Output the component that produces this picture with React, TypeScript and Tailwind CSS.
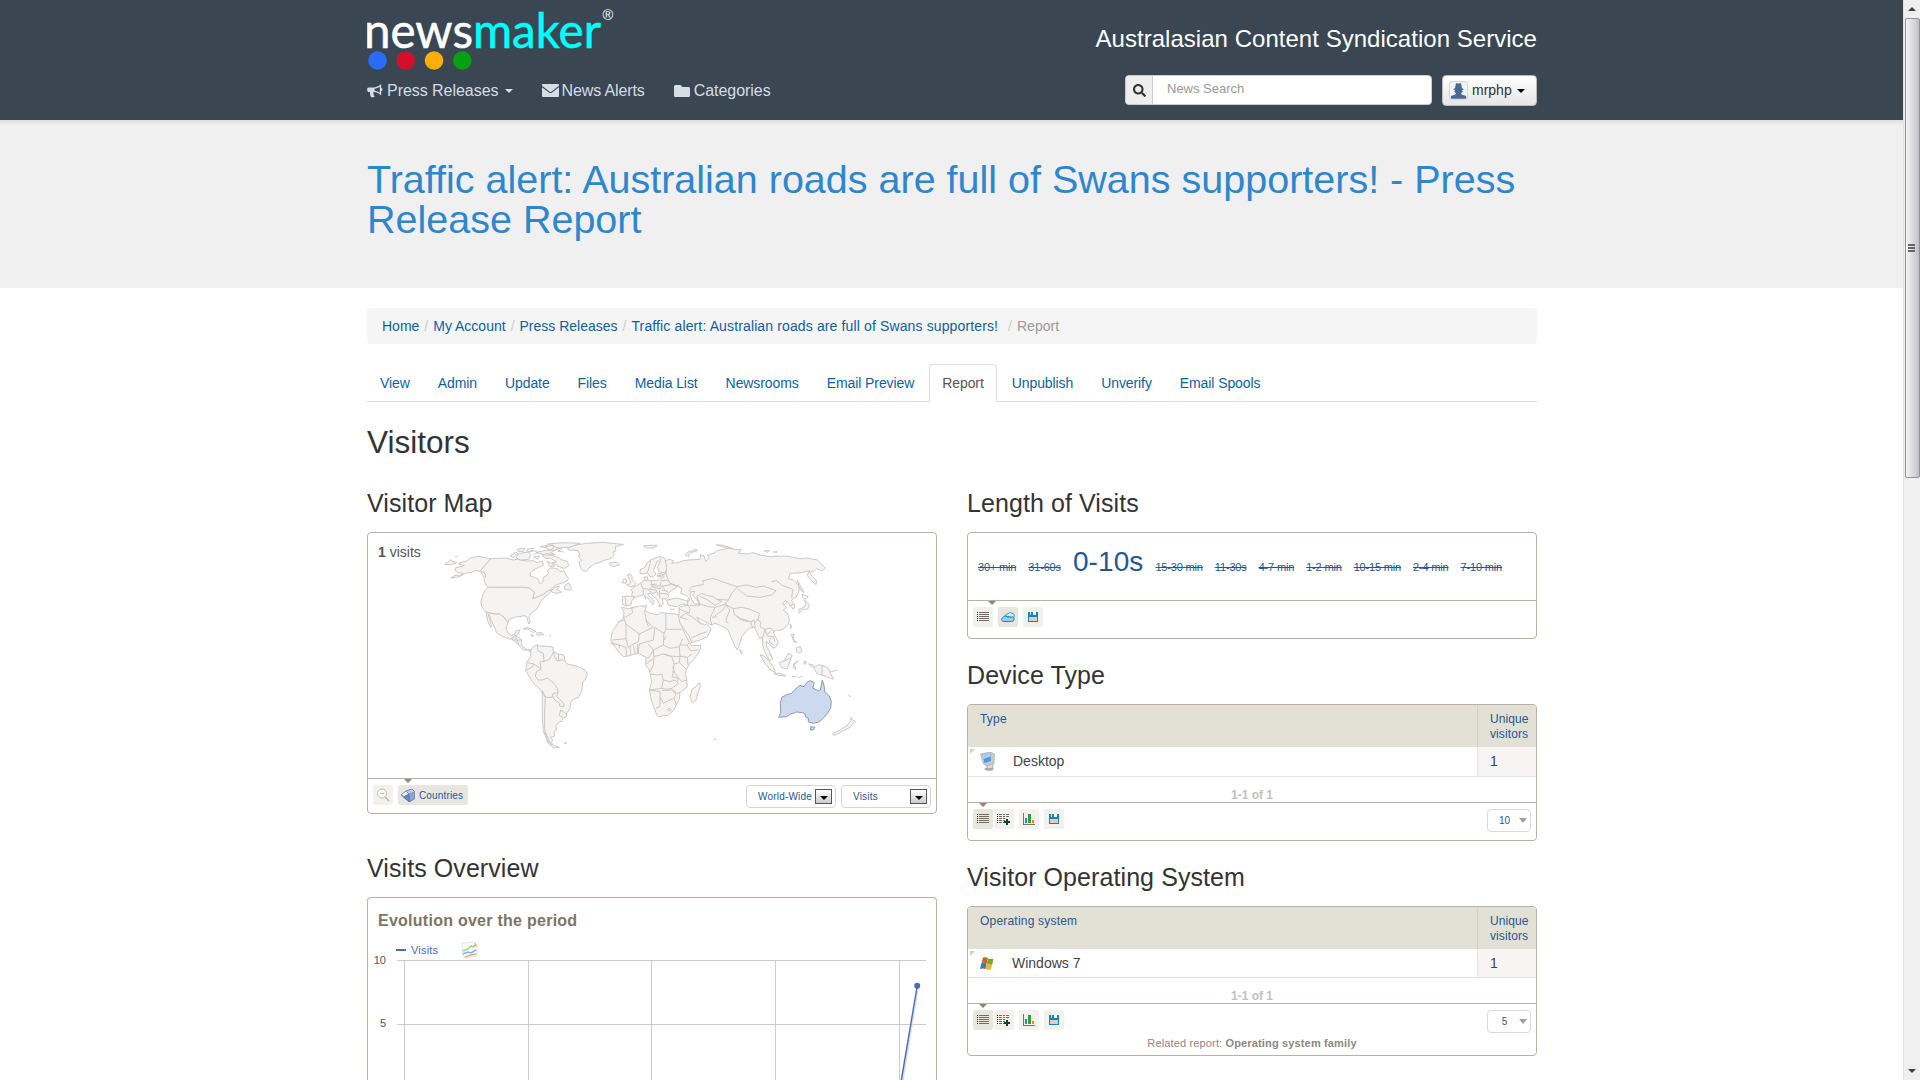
import React from 'react';
import { FaFolder, FaSearch } from 'react-icons/fa';

const SANS = "font-['Liberation_Sans',Arial,sans-serif]";

/* ---------- header ---------- */

function Logo() {
  return (
    <svg width="260" height="70" viewBox="0 0 260 70" className="block">
      <text x="-3" y="48" fontFamily="Lato, sans-serif" fontSize="48" stroke="#fff" strokeWidth="0.5" fill="#fff" textLength="109" lengthAdjust="spacingAndGlyphs">news</text>
      <text x="106" y="48" fontFamily="Lato, sans-serif" fontSize="48" stroke="#0ff" strokeWidth="0.5" fill="#0ff" textLength="128" lengthAdjust="spacingAndGlyphs">maker</text>
      <text x="235.500" y="20" fontFamily="Liberation Sans, sans-serif" fontSize="14.500" fill="#fff">®</text>
      <circle cx="10.500" cy="60.500" r="9.300" fill="#2b6bff" />
      <circle cx="38.700" cy="60.500" r="9.300" fill="#d50f2b" />
      <circle cx="67" cy="60.500" r="9.300" fill="#ffae0d" />
      <circle cx="95.300" cy="60.500" r="9.300" fill="#06a010" />
    </svg>
  );
}

function Bullhorn() {
  return (
    <svg width="16" height="14" viewBox="0 0 16 14" fill="#d5dde5">
      <path fillRule="evenodd" d="M14.200 0v4.200a1.400 1.400 0 0 1 0 2.800v4.400C12 9.500 9.500 8.300 6.900 8.100c-.9.500-.8 1.500-.1 2.100-.4.700.1 1.300 1 2-.6 1.300-3.200 1.400-4 .6C3.400 11.300 2.600 9.800 3 8H1.600A1.500 1.500 0 0 1 .2 6.500V4.800c0-.8.600-1.400 1.400-1.400h4.700C9 3.400 11.900 2.100 14.200 0zM12.800 2.800C11 4 9.200 4.600 7.600 4.700v2c1.700.2 3.500.8 5.200 2z" />
    </svg>
  );
}

function Envelope() {
  return (
    <svg width="17" height="13" viewBox="0 0 17 13">
      <rect width="17" height="13" rx="1" fill="#d5dde5" />
      <path d="M0 2.500l7.300 5.600c.8.600 1.600.6 2.400 0L17 2.500" fill="none" stroke="#3a4753" strokeWidth="1.100" />
    </svg>
  );
}

function Avatar() {
  return (
    <span className="flex h-[19px] w-[19px] items-center justify-center rounded-[3px] border border-[#d9d9d9] bg-[#f1f2f4]">
      <svg width="17" height="17" viewBox="0 0 17 17" fill="#4b6892">
        <path d="M6 1l1.500.5h2L11 1l1 5.200 1.800.8L12 8.500l.8 1.500-1.600 1 .3 1.500 4 1.200 1 1.500-1 1.500H1.500l-1-1.500 1-1.500 4-1.200.3-1.500-1.600-1 .8-1.500L3.200 7 5 6.200z" />
      </svg>
    </span>
  );
}

function Header() {
  return (
    <header className="h-[120px] bg-[#3a4753]">
      <div className="ml-[367px] flex h-full w-[1170px] justify-between">
        <div>
          <Logo />
          <nav className="mt-[9px] flex h-[23px] items-center text-[16px] tracking-[-0.04px] text-[#d5dde5]">
            <span className="flex items-center gap-1"><Bullhorn />Press Releases
              <span className="ml-[2px] h-0 w-0 border-x-4 border-t-4 border-x-transparent border-t-[#d5dde5]" />
            </span>
            <span className="ml-[29px] flex items-center gap-[3px] tracking-[-0.12px]"><Envelope />News Alerts</span>
            <span className="ml-[29px] flex items-center gap-[4px]"><FaFolder size={16} />Categories</span>
          </nav>
        </div>
        <div className="flex flex-col items-end">
          <div className="mt-[24px] h-[30px] whitespace-nowrap text-[24px] leading-[30px] tracking-[0.03px] text-white">Australasian Content Syndication Service</div>
          <div className="mt-[21px] flex gap-[10px]">
            <div className="flex h-[30px] w-[307px] overflow-hidden rounded-[4px] border border-[#ccc] bg-white">
              <span className="flex w-[27px] items-center justify-center border-r border-[#ccc] bg-[#eee] text-[#333]"><FaSearch size={13} /></span>
              <span className="pl-[14px] text-[13px] leading-[26px] text-[#999]">News Search</span>
            </div>
            <div className="flex h-[31px] w-[95px] items-center rounded-[4px] border border-[#bbb] bg-gradient-to-b from-white to-[#e6e6e6] pl-[6px] text-[14px] text-[#333]">
              <Avatar />
              <span className="ml-[4px]">mrphp</span>
              <span className="ml-[5px] h-0 w-0 border-x-4 border-t-4 border-x-transparent border-t-black" />
            </div>
          </div>
        </div>
      </div>
    </header>
  );
}

/* ---------- navigation ---------- */

const CRUMBS = ['Home', 'My Account', 'Press Releases', 'Traffic alert: Australian roads are full of Swans supporters!'];

function Breadcrumb() {
  return (
    <div className="mt-[20px] flex h-[36px] items-center rounded-[4px] bg-[#f5f5f5] px-[15px] text-[14px]">
      {CRUMBS.map((c, i) => (
        <React.Fragment key={c}>
          <span className={i === 3 ? 'tracking-[0.13px] text-[#0f5f9f]' : 'text-[#0f5f9f]'}>{c}</span>
          <span className={i === 3 ? 'ml-[10px] mr-[5px] text-[#ccc]' : 'mx-[5px] text-[#ccc]'}>/</span>
        </React.Fragment>
      ))}
      <span className="text-[#999]">Report</span>
    </div>
  );
}

const TABS = ['View', 'Admin', 'Update', 'Files', 'Media List', 'Newsrooms', 'Email Preview', 'Report', 'Unpublish', 'Unverify', 'Email Spools'];

function Tabs() {
  return (
    <div className="mt-[20px] flex h-[38px] border-b border-[#ddd] text-[14px] leading-[20px] tracking-[-0.09px]">
      {TABS.map((t) =>
        t === 'Report' ? (
          <span key={t} className="mr-[2px] h-[38px] rounded-t-[4px] border border-b-0 border-[#ddd] bg-white px-[12px] pt-[8px] text-[#555]">{t}</span>
        ) : (
          <span key={t} className="mr-[2px] px-[13px] pt-[9px] text-[#0f5f9f]">{t}</span>
        ),
      )}
    </div>
  );
}

/* ---------- small icons ---------- */

function IconBox({ active, children }: { active?: boolean; children: React.ReactNode }) {
  return (
    <span className={active ? 'flex h-[20px] w-[20px] items-center justify-center rounded-[2px] bg-[#e8e7df]' : 'flex h-[20px] w-[20px] items-center justify-center rounded-[2px] bg-[#f2f1ed]'}>
      {children}
    </span>
  );
}

function ListIcon() {
  return (
    <svg width="12" height="10" viewBox="0 0 12 10" shapeRendering="crispEdges">
      {[0, 2, 4, 6, 8].map((y) => (
        <g key={y}>
          <rect x="0" y={y} width="1" height="1" fill="#222" />
          <rect x="2" y={y} width="10" height="1" fill="#776c5c" />
        </g>
      ))}
    </svg>
  );
}

function ListPlusIcon() {
  return (
    <svg width="14" height="11" viewBox="0 0 14 11" shapeRendering="crispEdges">
      {[0, 2, 4, 6, 8].map((y) => (
        <g key={y}>
          <rect x="0" y={y} width="1" height="1" fill="#222" />
          <rect x="2" y={y} width="3" height="1" fill="#776c5c" />
          <rect x="6" y={y} width="2" height="1" fill="#776c5c" />
          {y < 4 && <rect x="9" y={y} width="3" height="1" fill="#776c5c" />}
        </g>
      ))}
      <path d="M10 5v6M7 8h6" stroke="#054a22" strokeWidth="2" />
    </svg>
  );
}

function BarsIcon() {
  return (
    <svg width="12" height="12" viewBox="0 0 12 12" shapeRendering="crispEdges">
      <path d="M0 0h1v11h11v1H0z" fill="#7d7263" />
      <rect x="2" y="5" width="2" height="5" fill="#1d8fc5" />
      <rect x="5" y="1" width="3" height="9" fill="#2f9d3a" />
      <rect x="9" y="7" width="2" height="3" fill="#f08519" />
    </svg>
  );
}

function DiskIcon() {
  return (
    <svg width="10" height="10" viewBox="0 0 10 10" shapeRendering="crispEdges">
      <path d="M0 0h2v3h6V0h2v10H0z" fill="#0f86c3" />
      <rect x="3" y="0" width="2" height="3" fill="#0f86c3" />
      <rect x="2" y="0" width="1" height="3" fill="#cfe6f2" />
      <rect x="5" y="0" width="2" height="3" fill="#fff" />
      <rect x="1" y="5" width="8" height="4" fill="#d8d0c2" />
    </svg>
  );
}

function CloudIcon() {
  return (
    <svg width="14" height="10" viewBox="0 0 14 10">
      <path d="M4.500 4C4.500 2.200 5.500 1.500 7 1.900 8 .3 10.200.2 11 1.500c1.700-.2 2.400.7 2.300 2.200L12.500 6z" fill="#d5eef8" stroke="#3a9ecb" strokeWidth="1" />
      <path d="M2.300 9.500C.2 9.300 0 6 2 5.500 2.600 3.600 5.400 3.600 6.200 5h4.500c1.500-.4 2.400.4 2.400 1.900 0 1.700-.8 2.600-2.300 2.600z" fill="#8fd0ea" stroke="#1b80b3" strokeWidth="1" />
    </svg>
  );
}

function Notch({ left }: { left: string }) {
  return <span className={`absolute top-0 h-0 w-0 border-x-4 border-t-4 border-x-transparent border-t-[#8f8576] ${left}`} />;
}

/* ---------- map ---------- */

const WEST = [
  'M62,144 75,136 88,137 100,130 85,128 75,122 78,112 95,110 103,106 85,102 90,98 108,94 120,84 145,79 183,86 151,122 163,128 169,140 170,148 163,144 158,134 150,124 135,122 124,127 112,128 100,134 85,141z',
  'M183,86 205,85 230,84 250,90 262,88 290,93 310,92 320,98 337,93 340,106 325,112 310,120 302,128 300,138 314,142 325,148 328,159 334,160 338,158 340,142 350,137 355,130 353,122 362,114 370,114 385,118 390,125 402,122 408,135 416,146 412,152 400,158 380,164 362,178 355,182 340,193 325,200 308,206 313,188 298,174 280,172 175,172 166,162 162,148 168,138 163,128 151,122z',
  'M362,184 375,172 388,168 380,178 395,186 384,190 370,188z M402,170 416,158 424,172 422,181 405,178z',
  'M175,172 280,172 298,174 313,188 308,206 325,200 340,193 355,182 366,180 352,196 343,202 330,218 326,228 318,240 302,250 297,262 301,275 297,282 292,270 290,260 282,257 270,260 256,261 245,266 236,268 234,278 222,262 208,252 192,252 168,246 155,230 153,215 158,195 166,180z',
  'M168,246 192,252 208,252 222,262 234,278 228,295 235,310 245,316 255,312 258,302 270,300 264,314 255,318 246,322 247,328 235,326 215,318 199,308 195,295 185,275 178,255 174,250 178,265 184,285 182,293 172,270z',
  'M246,328 254,316 263,320 275,329 273,340 280,352 290,358 301,358 300,365 290,360 280,360 268,346 258,338z M250,330 262,330 266,342 M258,318 258,330 M262,330 274,330',
  'M280,297 290,292 305,297 318,304 308,307 296,298z M318,310 335,307 341,314 322,316z M303,315h8v3h-8z M360,315h2v2h-2z',
  'M412,57 430,46 470,40 520,37 555,41 580,43 556,50 558,62 548,66 553,75 545,84 520,92 508,98 495,100 485,108 476,115 470,124 458,122 450,108 447,96 455,92 445,78 450,76 444,62 418,60z',
  'M538,100 545,97 560,98 569,104 552,110 541,107z',
  'M44,103 62,89 66,94 80,98 64,104z M75,79l8,0',
  'M240,78 258,66 264,72 250,82z M262,58 285,54 280,64 264,64z M258,84 268,70 296,66 302,76 296,88 272,90z M290,58 312,54 306,64 292,66z M312,80 328,78 322,88z M330,50 352,46 346,54z M336,76 352,70 388,84 396,90 412,94 416,106 404,116 384,108 366,98 380,96 360,84 348,86z M318,68 342,62 378,60 362,68 376,74 350,76z M345,52 368,44 372,54 360,60z M352,42 400,38 450,40 418,52 384,54 370,48z M376,58 396,54 390,62z M352,94 364,100 374,108 360,110z M310,76l14,-10 M384,64l18,2 M302,62l20,2',
  'M303,360 310,350 322,344 328,348 345,348 368,351 370,365 385,372 402,376 406,396 412,402 430,406 445,410 465,420 472,432 468,445 458,458 455,485 445,502 430,508 422,518 420,535 408,552 410,560 398,565 396,574 388,575 378,588 380,600 372,606 374,618 362,622 368,630 364,638 370,645 388,652 372,654 352,638 350,628 340,602 337,560 337,490 330,478 312,462 298,440 287,422 290,398 302,380z',
  'M322,344 324,362 340,370 342,394 330,396 333,418 320,424 316,438 324,450 337,450 M342,394 358,388 368,372 370,365 M370,365 374,380 380,392 402,390 M385,372 386,392 M292,398 312,402 306,412 290,420 M312,402 332,416 M337,450 352,444 372,460 382,474 384,488 370,490 366,502 346,502 338,482 M384,488 380,500 396,514 402,522 400,530 M366,492 372,508 390,520 388,528 402,530 M392,540 410,552 M392,540 388,556 398,564 M337,486 346,502 344,540 344,600 350,616 362,640',
  'M340,606 348,612 352,632 366,645 M403,640h6l-3,-4z',
];

const EAST = [
  'M65,232 85,236 118,228 135,228 136,242 145,248 160,252 175,254 182,247 198,250 228,252 234,254 240,272 250,300 260,322 270,338 275,347 303,346 298,365 282,388 268,402 260,418 256,430 260,448 262,470 240,488 238,508 230,520 222,540 205,555 175,560 170,555 165,540 155,515 148,480 155,455 152,440 148,420 137,405 138,382 125,375 115,370 98,374 85,378 70,380 55,365 45,350 34,340 33,325 37,305 55,278 70,265 72,248z',
  'M95,232 98,248 70,265 M54,275 72,270 M72,266 78,282 78,326 38,330 M78,282 118,312 158,292 138,270 134,242 M118,312 115,335 95,345 85,352 78,326 M158,292 164,298 160,330 118,342 M138,270 145,290 M197,250 198,298 245,298 M198,298 192,310 164,292 M192,310 190,345 160,360 145,342 M190,345 210,355 238,350 248,325 M198,320 192,330 M33,340 58,345 58,355 M35,332 45,345 M58,345 78,352 80,378 M90,348 92,375 M100,346 106,372 M113,342 112,370 M118,342 115,360 115,370 M160,360 145,385 138,382 M160,360 162,380 190,372 210,378 240,380 238,350 M240,345 260,345 270,338 M260,345 272,362 295,360 M240,378 262,382 275,372 M262,382 264,405 M162,380 160,405 150,425 M138,402 160,385 M190,372 215,380 222,400 218,440 M240,380 238,398 222,402 M238,398 260,418 M218,410 225,430 245,455 260,450 M152,432 172,435 185,432 190,450 185,475 148,480 M190,450 210,455 225,450 235,460 M185,475 200,478 215,475 235,460 M215,475 230,490 240,488 M148,480 180,485 180,500 M185,482 215,480 228,492 222,505 205,512 190,520 180,500 180,530 168,535 M222,505 228,525 M207,535a5,4 0 1 0 6,3z M215,440 235,445 232,455',
  'M298,457 301,468 295,485 288,510 277,518 270,502 276,478 288,470z',
  'M67,200 85,198 104,202 96,212 92,225 76,228 68,224z M75,200 78,226',
  'M92,180 100,172 112,166 120,160 125,156 132,150 140,150 152,152 170,152 182,146 192,140 186,132 175,130 172,138 192,134 200,128 196,112 195,92 210,88 222,94 215,100 235,98 250,92 265,90 300,88 302,74 312,78 318,95 328,82 322,76 345,68 350,62 385,55 422,60 416,70 440,72 460,68 480,75 510,80 560,78 600,86 620,84 652,90 676,114 668,122 650,116 642,124 628,124 635,138 650,152 648,164 632,150 622,136 628,122 605,128 570,130 566,146 580,150 595,165 598,180 590,200 578,206 575,212 585,226 580,238 572,228 566,218 555,212 548,222 560,232 550,240 562,250 568,268 566,280 550,298 535,302 530,300 520,306 526,320 535,336 528,350 518,355 512,345 498,335 500,350 510,368 518,388 508,392 496,370 488,345 488,322 478,325 472,310 462,290 445,296 438,305 425,320 420,340 412,360 405,350 388,310 384,300 370,290 345,280 335,285 310,272 290,262 300,278 315,285 320,282 334,296 322,320 300,330 275,338 268,320 240,280 236,262 238,232 250,228 265,226 248,222 230,230 205,226 200,210 232,204 266,214 270,208 258,196 242,190 245,175 225,165 210,160 232,170 215,182 204,190 206,200 196,208 186,205 190,220 182,230 172,210 160,198 150,190 142,192 155,205 163,216 158,224 150,212 138,200 130,194 118,198 105,202 95,196 98,185z',
  'M120,120 135,112 142,98 152,90 170,82 182,80 195,86 200,112 196,128 178,126 172,112 180,98 172,92 166,108 160,122 168,132 160,140 150,140 142,128 130,132 120,130z M152,90 148,110 142,128 M182,86 180,98',
  'M80,165 92,160 88,148 84,138 88,130 96,138 96,148 106,158 104,168 90,170z M66,158 72,146 80,150 78,160z M80,132 86,138',
  'M136,152 132,142 142,140 144,152z M138,222l2,10 M172,228l14,2 M210,238l14,-1 M134,200l4,8z',
  'M122,160 128,175 148,178 158,168 152,152 M158,168 180,168 184,152 M148,178 168,180 175,196 M158,172 180,176 185,168 210,165 M180,176 178,190 204,192 M178,190 180,205 M184,152 205,150 210,160 M172,138 190,142 M130,178 130,194 M186,180 204,185 M146,182 160,190 168,186 M150,165 170,162 M188,168 196,182 M196,128 204,148 M208,162 236,168',
  'M265,205 262,222 270,235 268,250 236,236 M268,182 275,170 310,164 308,152 340,145 375,158 412,170 395,190 385,210 350,208 340,200 320,196 305,190 290,200 300,222 296,230 M268,182 276,192 M270,225 282,228 300,222 325,230 345,232 340,245 330,262 335,285 M300,200 320,208 345,226 365,214 350,208 M385,210 375,222 400,236 425,232 450,238 478,250 475,268 462,280 M375,222 365,226 345,232 M345,258 368,240 378,225 M335,262 350,260 M378,225 390,240 380,262 378,275 385,280 M400,236 402,252 420,265 452,275 462,270 M410,260 425,270 445,275 M410,170 440,165 468,172 490,168 528,182 515,195 480,202 440,198 412,176 M515,155 530,152 545,165 578,178 575,205 M470,268 482,276 480,290 495,298 510,294 525,305 M495,298 488,322 M495,300 502,318 520,320 525,335 M512,322 508,335 520,345 M502,312 514,304 M452,275 458,295 M462,270 466,292 M550,225 562,218 M567,228 582,222 M508,372 516,380 M240,262 258,250 278,262 305,284 M240,262 262,268 M272,325 300,312 322,305',
  'M285,185 278,195 290,208 298,222 284,222 275,208 270,196 275,184z',
  'M255,75 265,66 290,58 292,62 268,70 266,80z M130,48 150,46 172,46 160,54 140,54z M348,44 370,46 400,56 380,54z M492,62h16l-6,5z M520,66h12z M420,60l8,-4',
  'M592,150 600,165 612,188 606,184 596,168z M606,192 625,200 616,208 608,202z M614,210 628,224 624,236 606,240 598,250 596,238 612,232 618,222z M570,282 575,290 572,296z M418,358 428,366 424,372z M574,314 582,312 580,326 590,338 582,336z M590,352 602,350 606,364 598,370 588,362z M480,374 492,378 508,394 520,410 526,428 512,420 495,400z M522,430 540,430 558,438 535,436z M538,398 552,392 566,370 576,376 570,394 562,416 546,414z M546,396l26,-12 M580,402 596,392 584,404 588,418 580,414z M575,440 592,440 M594,444 608,438 M612,394h6v8h-6z M626,402 638,404 644,412 656,404 672,408 684,414 692,430 700,448 688,444 675,438 650,430 645,418z M666,406 666,438 M690,426 712,420 M744,494 753,502',
  'M753,562 758,570 766,574 756,584 750,592 730,602 712,612 700,616 698,610 720,600 744,584 752,572z M342,628l6,0',
];

const AUSTRALIA =
  'M536,562 542,548 541,520 545,502 560,494 575,490 585,478 600,466 612,470 620,458 630,452 643,458 638,474 655,482 661,480 667,450 672,466 675,485 688,498 694,515 692,535 682,550 670,565 656,576 640,580 625,576 625,564 618,562 615,552 608,548 590,546 572,552 560,560z M632,590 645,592 640,600 632,600z';

function WorldMap() {
  return (
    <svg width="440" height="225" viewBox="0 0 1320 675" className="block" strokeLinejoin="round">
      <g fill="#f5f4f3" stroke="#c6c5c4" strokeWidth="2.800">
        {WEST.map((d, i) => <path key={d} d={d} fill={i === 12 || i === 13 ? 'none' : '#f5f4f3'} />)}
      </g>
      <g transform="translate(510 0)" fill="#f5f4f3" stroke="#c6c5c4" strokeWidth="2.800">
        {EAST.map((d, i) => <path key={d} d={d} fill={i === 1 || i === 8 || i === 9 ? 'none' : i === 10 ? '#fff' : '#f5f4f3'} />)}
        <path d={AUSTRALIA} fill="#cdd9ef" stroke="#8a93a3" />
      </g>
    </svg>
  );
}

function SelectBox({ label }: { label: string }) {
  return (
    <span className="flex h-[23px] w-[90px] items-center justify-between whitespace-nowrap rounded-[4px] border border-[#d4d4d4] pl-[11px] pr-[3px] text-[10px] tracking-[0.2px] text-[#255792]">
      {label}
      <span className="flex h-[15px] w-[17px] shrink-0 items-center justify-center border border-[#555] bg-gradient-to-b from-white to-[#ccc]">
        <span className="mt-[3px] h-0 w-0 border-x-4 border-t-4 border-x-transparent border-t-black" />
      </span>
    </span>
  );
}

function MapPanel() {
  return (
    <section className="mt-[9px] h-[282px] rounded-[4px] border border-[#b8b1a4]">
      <div className="flex h-[245px]">
        <div className="w-[62px] shrink-0 whitespace-nowrap pl-[10px] pt-[9px] text-[14px] leading-[20px] text-[#555]"><b>1</b> visits</div>
        <div className="-mt-[3px]"><WorldMap /></div>
      </div>
      <div className="relative flex h-[35px] border-t border-[#b8b1a4] pl-[5px] pr-[5px] pt-[6px]">
        <Notch left="left-[36px]" />
        <IconBox>
          <svg width="14" height="14" viewBox="0 0 14 14" fill="none" stroke="#bcbab5">
            <circle cx="6" cy="5.500" r="4.500" fill="#fafafa" /><path d="M4 5.500h4M9.200 9l4 4" /><path d="M9.500 9.500l3.300 3.300" strokeWidth="1.600" />
          </svg>
        </IconBox>
        <span className="ml-[5px] flex h-[20px] w-[70px] items-center gap-[4px] rounded-[2px] bg-[#e8e7df] pl-[3px] text-[10px] tracking-[0.15px] text-[#255792]">
          <svg width="14" height="13" viewBox="0 0 14 13" strokeWidth=".7">
            <path d="M5 2l6-2 3 3-.5 7-5 3L3 8.500 0 6z" fill="#8da5d2" stroke="#586d99" /><path d="M5 2l3 3L3.500 7.500 0 6z" fill="#eef4ff" stroke="#7188b5" /><path d="M8 5l.5 8L3 8.500l.5-1z" fill="#6f88bd" stroke="#586d99" /><path d="M5 2l6-2 3 3-6 2z" fill="#b9c9e8" stroke="#7188b5" />
          </svg>
          <span className="whitespace-nowrap pt-px">Countries</span>
        </span>
        <span className="ml-auto flex gap-[5px]">
          <SelectBox label="World-Wide" />
          <SelectBox label="Visits" />
        </span>
      </div>
    </section>
  );
}

/* ---------- visits overview ---------- */

function OverviewPanel() {
  return (
    <section className="mt-[9px] h-[240px] rounded-t-[4px] border border-b-0 border-[#b8b1a4]">
      <h4 className="ml-[10px] h-[32px] pt-[13px] text-[16px] font-bold leading-[20px] tracking-[0.26px] text-[#7e7363]">Evolution over the period</h4>
      <svg width="568" height="160" viewBox="0 0 568 160" className="block" fontFamily="Liberation Sans, sans-serif">
        <rect x="28" y="19" width="10" height="2" fill="#4a6cb3" />
        <text x="43" y="24" fontSize="11" fill="#4a6cb3" textLength="27">Visits</text>
        <g transform="translate(94 12)">
          <path d="M0 1l12-1 3 3v11L3 16 1 14z" fill="#fafafa" stroke="#ddd" strokeWidth=".7" />
          <path d="M1 9l5-2 3-3 2 1 3-3" stroke="#a5dc78" strokeWidth="1.600" fill="none" />
          <path d="M1 12l5-2 3 1 5-3" stroke="#7ab4f2" strokeWidth="1.500" fill="none" />
          <path d="M3 15l6-2 5-1M13 1l1 4" stroke="#f0a878" strokeWidth="1.400" fill="none" />
        </g>
        <g fontSize="11" fill="#545454" textAnchor="end"><text x="18" y="34">10</text><text x="18" y="97">5</text></g>
        <g stroke="#ccc" shapeRendering="crispEdges">
          <path d="M28.500 30.500H558M28.500 94.500H558" />
          <path d="M36.500 30v130M160.500 30v130M283.500 30v130M407.500 30v130M531.500 30v130" />
        </g>
        <path d="M534.300 152L550 57" stroke="#ddd" strokeWidth="2" />
        <path d="M533 152L549.200 56" stroke="#4a6cb3" strokeWidth="1.400" />
        <circle cx="549.200" cy="55.700" r="3" fill="#4a6cb3" />
      </svg>
    </section>
  );
}

/* ---------- length of visits ---------- */

const LENGTHS = ['30+ min', '31-60s', '0-10s', '15-30 min', '11-30s', '4-7 min', '1-2 min', '10-15 min', '2-4 min', '7-10 min'];

function LengthPanel() {
  return (
    <section className="mt-[9px] h-[107px] rounded-[4px] border border-[#b8b1a4]">
      <div className="flex h-[67px] items-baseline gap-[12px] whitespace-nowrap pl-[10px] pt-[11px] text-[#255792]">
        {LENGTHS.map((l) =>
          l === '0-10s' ? <span key={l} className="text-[28px] leading-[36px] tracking-[0.1px]">{l}</span> : <span key={l} className="text-[11px] tracking-[-0.17px] line-through">{l}</span>,
        )}
      </div>
      <div className="relative flex h-[38px] gap-[5px] border-t border-[#b8b1a4] pl-[5px] pt-[6px]">
        <Notch left="left-[20px]" />
        <IconBox><ListIcon /></IconBox>
        <IconBox active><CloudIcon /></IconBox>
        <IconBox><DiskIcon /></IconBox>
      </div>
    </section>
  );
}

/* ---------- data tables ---------- */

function DesktopIcon() {
  return (
    <svg width="16" height="19" viewBox="0 0 16 19">
      <ellipse cx="9" cy="17" rx="4.500" ry="1.800" fill="#aaa" />
      <path d="M6 12l6-1 1 5-5 1z" fill="#ddd" stroke="#999" strokeWidth=".7" />
      <path d="M.5 2l10-2 4 2-.5 10-8 2L3 11z" fill="#c8cbcd" stroke="#aaa" strokeWidth=".7" />
      <path d="M2.500 3l8-1.500.5 7.500-6.500 2z" fill="#4d9ae0" />
      <path d="M2.500 3l8-1.500v3L3.500 7z" fill="#a4d2f8" />
    </svg>
  );
}

function WindowsIcon() {
  return (
    <svg width="14" height="13" viewBox="0 0 14 13">
      <path d="M3 .5C5-.2 6 .2 7.800 1L6.700 6.500C4.800 5.700 3.500 5.700 1.600 6.200z" fill="#c9652a" />
      <path d="M7.800 1.200c2 1 3.500 1 5.700.5L12.300 7.500c-1.800.4-3.500.3-5.400-.9z" fill="#76a634" />
      <path d="M1.400 6.200c1.800-.6 3.400-.5 5.200.4L5.500 12C3.500 11.200 2 11.200 0 12z" fill="#3c78bd" />
      <path d="M6.700 6.800c1.500.8 3.500 1.100 5.400.6L10.900 12.500c-1.700.5-3.500.4-5.400-.5z" fill="#e4ba28" />
    </svg>
  );
}

interface TableProps {
  heading: string;
  label: string;
  icon: React.ReactNode;
  count: string;
  rowClass: string;
  panelClass: string;
  labelClass: string;
  related?: string;
}

function TablePanel({ heading, label, icon, count, rowClass, panelClass, labelClass, related }: TableProps) {
  return (
    <section className={`mt-[9px] overflow-hidden rounded-[4px] border border-[#b8b1a4] ${panelClass}`}>
      <div className="flex h-[42px] bg-[#e3e1d6] text-[12px] leading-[15px] text-[#255792]">
        <span className="flex-1 pl-[12px] pt-[7px] tracking-[0.2px]">{heading}</span>
        <span className="w-[59px] border-l border-[#d2cfc2] pl-[12px] pt-[7px] tracking-[0.1px]">Unique visitors</span>
      </div>
      <div className={`relative flex border-b border-[#e2e2e2] text-[14px] text-[#444] ${rowClass}`}>
        <span className="absolute left-[2px] top-[2px] h-0 w-0 border-r-[5px] border-t-[5px] border-r-transparent border-t-[#d2cfc2]" />
        <span className="flex w-[33px] items-center pl-[12px]">{icon}</span>
        <span className={`flex flex-1 items-center ${labelClass}`}>{label}</span>
        <span className="flex w-[59px] items-center border-l border-[#e2e2e2] bg-[#f6f5f3] pl-[12px]">1</span>
      </div>
      <div className="h-[25px] pt-[11px] text-center text-[12px] font-bold leading-[14px] text-[#bfbfbf]">1-1 of 1</div>
      <div className="relative flex border-t border-[#b8b1a4] pl-[5px] pr-[5px] pt-[6px]">
        <Notch left="left-[11px]" />
        <IconBox active><ListIcon /></IconBox>
        <span className="ml-px"><IconBox><ListPlusIcon /></IconBox></span>
        <span className="ml-[5px]"><IconBox><BarsIcon /></IconBox></span>
        <span className="ml-[5px]"><IconBox><DiskIcon /></IconBox></span>
        <span className="ml-auto flex h-[23px] w-[44px] items-center justify-between rounded-[4px] border border-[#d9d9d9] pr-[3px] text-[10px] text-[#255792]">
          <span className="w-[32px] pl-[2px] text-center">{count}</span>
          <span className="h-0 w-0 shrink-0 border-x-4 border-t-[5px] border-x-transparent border-t-[#a0a0a0]" />
        </span>
      </div>
      {related && (
        <div className="mt-[3px] text-center text-[11px] leading-[14px] tracking-[0.15px] text-[#888]">
          Related report: <b>{related}</b>
        </div>
      )}
    </section>
  );
}

function Title({ children, className }: { children: React.ReactNode; className: string }) {
  return <h3 className={`h-[40px] text-[25px] leading-[40px] tracking-[0.08px] text-[#333] ${className}`}>{children}</h3>;
}

/* ---------- scrollbar ---------- */

function Scrollbar() {
  return (
    <aside className="flex w-[17px] flex-col items-center border-l border-[#e4e4e4] bg-[#f0f0f0]">
      <span className="mt-[7px] h-0 w-0 border-x-[4px] border-b-[4px] border-x-transparent border-b-[#404040]" />
      <div className="mt-[7px] flex h-[460px] w-[15px] items-center justify-center rounded-[2px] border border-[#929292] bg-gradient-to-r from-[#f5f5f5] via-[#dcdcde] to-[#c0c0c4] pr-[2px]">
        <span className="flex flex-col gap-px">
          <i className="h-[2px] w-[7px] bg-[#666]" />
          <i className="h-[2px] w-[7px] bg-[#666]" />
          <i className="h-[2px] w-[7px] bg-[#666]" />
        </span>
      </div>
      <span className="mb-[7px] mt-auto h-0 w-0 border-x-[4px] border-t-[4px] border-x-transparent border-t-[#404040]" />
    </aside>
  );
}

export default function App() {
  return (
    <div className={`flex h-[1080px] w-[1920px] overflow-hidden bg-white ${SANS}`}>
      <div className="w-[1903px] overflow-hidden">
        <Header />
        <div className="h-[168px] bg-[#f0f0f0]">
          <div className="h-[5px] bg-gradient-to-b from-[#dddddd] to-[#f0f0f0]" />
          <h1 className="ml-[367px] w-[1170px] pt-[34px] text-[39.5px] leading-[40px] text-[#2e87cd]">
            Traffic alert: Australian roads are full of Swans supporters! - Press Release Report
          </h1>
        </div>
        <main className="ml-[367px] w-[1170px]">
          <Breadcrumb />
          <Tabs />
          <h2 className="mt-[20px] h-[40px] text-[31.5px] leading-[40px] text-[#333]">Visitors</h2>
          <div className="mt-[21px] flex gap-[30px]">
            <div className="w-[570px]">
              <Title className="">Visitor Map</Title>
              <MapPanel />
              <Title className="mt-[34px]">Visits Overview</Title>
              <OverviewPanel />
            </div>
            <div className="w-[570px]">
              <Title className="">Length of Visits</Title>
              <LengthPanel />
              <Title className="mt-[16px]">Device Type</Title>
              <TablePanel heading="Type" label="Desktop" icon={<DesktopIcon />} count="10" rowClass="h-[30px]" panelClass="h-[137px]" labelClass="pl-[12px]" />
              <Title className="mt-[16px]">Visitor Operating System</Title>
              <TablePanel heading="Operating system" label="Windows 7" icon={<WindowsIcon />} count="5" rowClass="h-[29px]" panelClass="h-[150px]" labelClass="pl-[11px]" related="Operating system family" />
            </div>
          </div>
        </main>
      </div>
      <Scrollbar />
    </div>
  );
}
